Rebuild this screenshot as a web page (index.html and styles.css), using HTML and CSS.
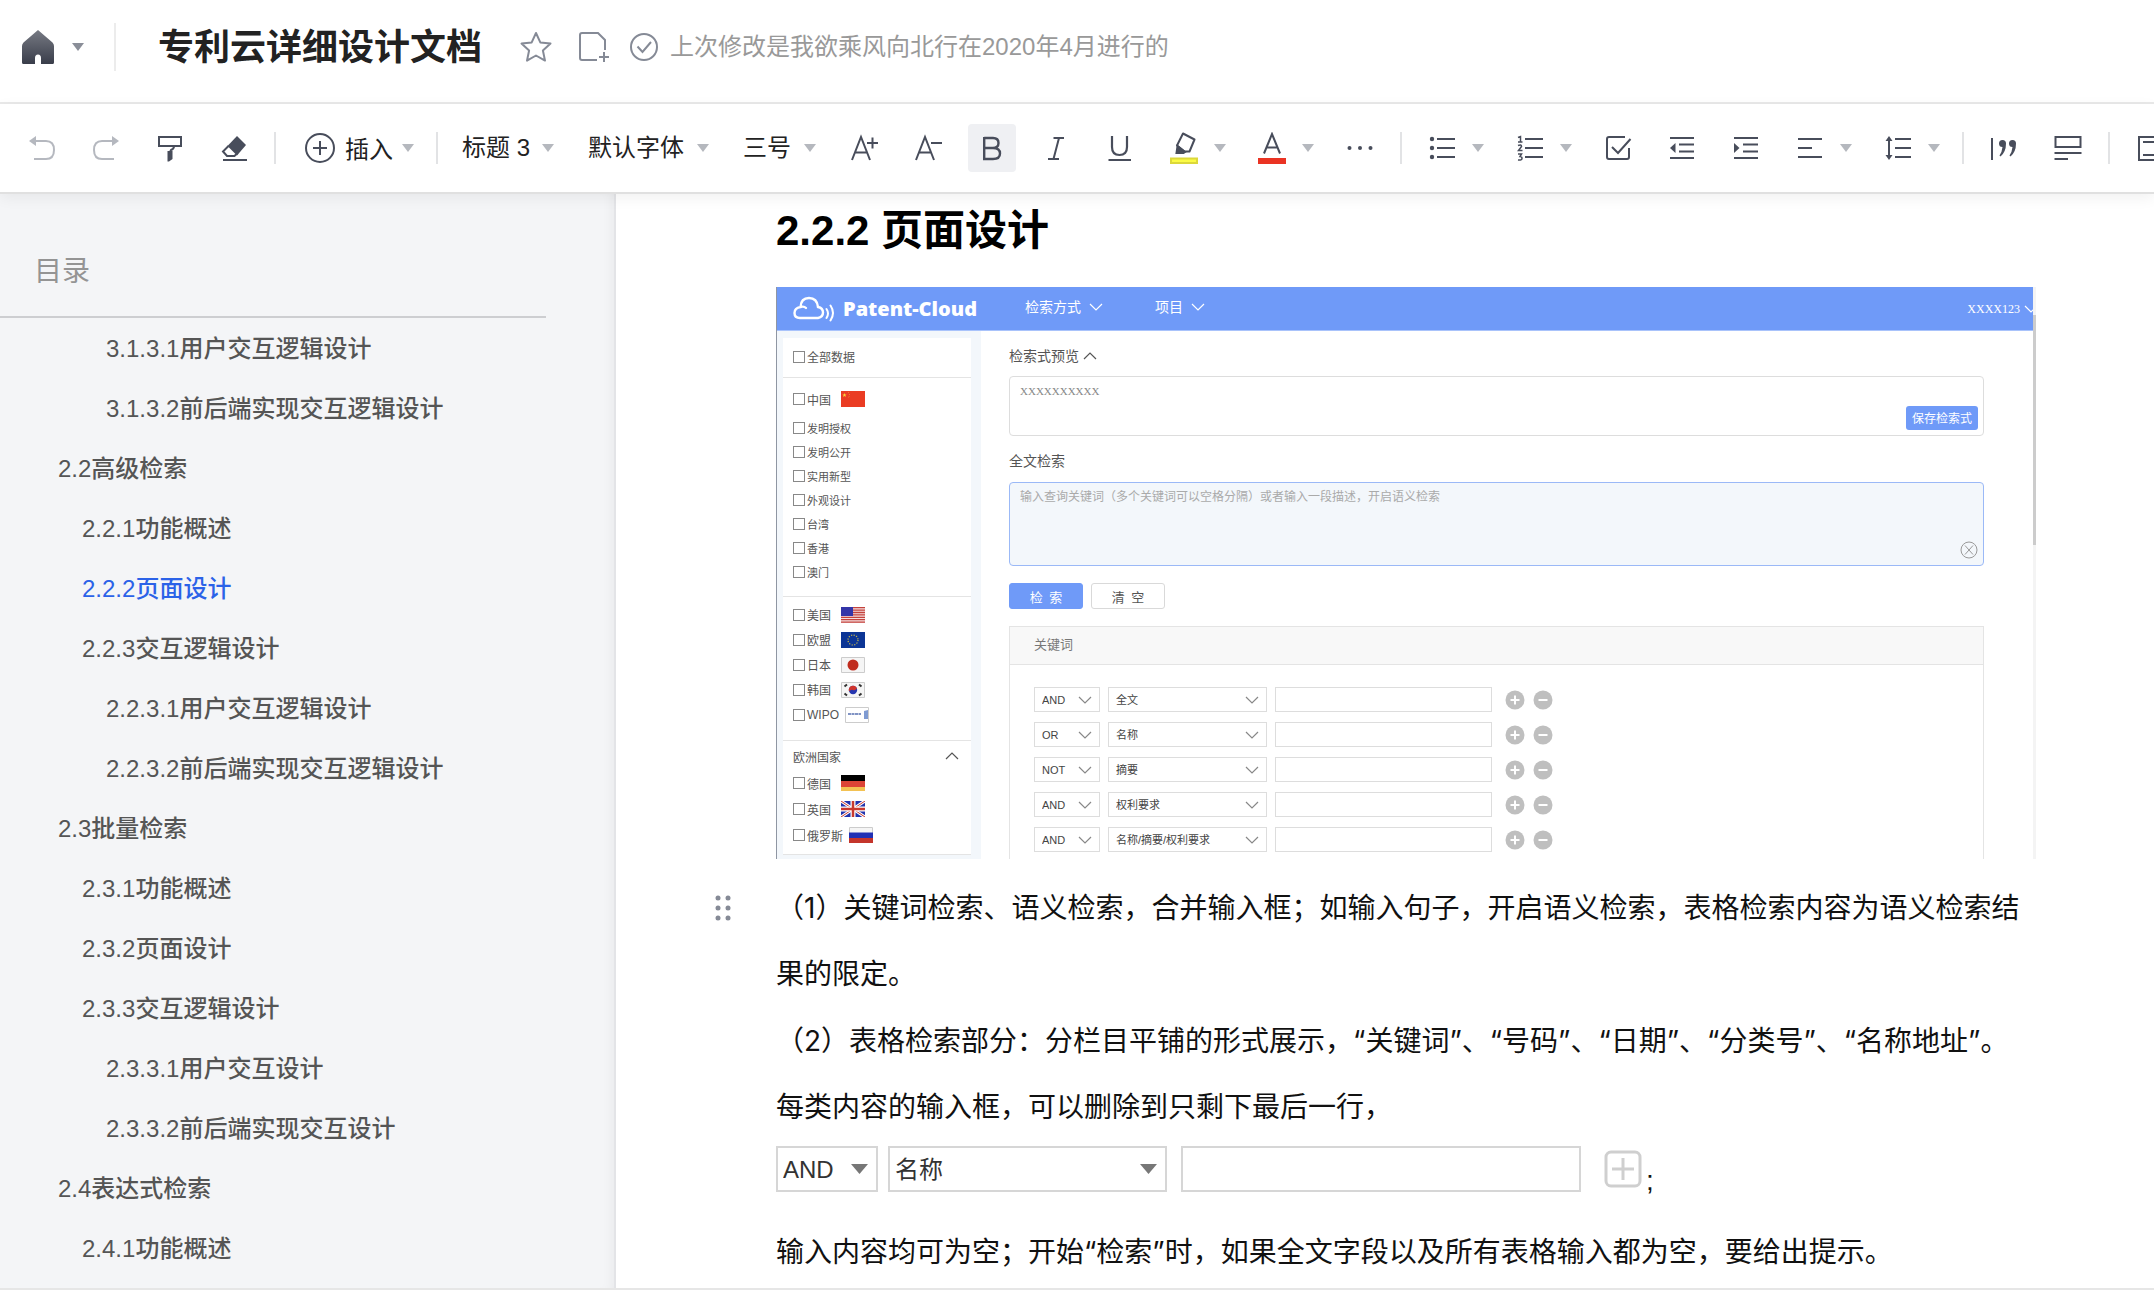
FILE: index.html
```html
<!DOCTYPE html>
<html lang="zh-CN">
<head>
<meta charset="utf-8">
<meta name="viewport" content="width=device-width, initial-scale=1">
<title>专利云详细设计文档</title>
<link rel="stylesheet" href="styles.css">
</head>
<body>
<svg class="sprite" aria-hidden="true">
  <symbol id="caret" viewBox="0 0 12 8"><path d="M0 0h12L6 8z" fill="currentColor"/></symbol>
  <symbol id="chev" viewBox="0 0 14 8"><path d="M1 1l6 6 6-6" fill="none" stroke="currentColor" stroke-width="1.200"/></symbol>
  <symbol id="add" viewBox="0 0 20 20"><circle cx="10" cy="10" r="9.5" fill="#bfbfbf"/><path d="M10 5.500v9M5.500 10h9" stroke="#fff" stroke-width="2"/></symbol>
  <symbol id="sub" viewBox="0 0 20 20"><circle cx="10" cy="10" r="9.5" fill="#bfbfbf"/><path d="M5.500 10h9" stroke="#fff" stroke-width="2"/></symbol>
</svg>

<header class="topbar">
  <button class="home" aria-label="首页">
    <svg width="32" height="34" viewBox="0 0 32 34"><defs><linearGradient id="g" x1="0" y1="0" x2="0" y2="1"><stop offset="0" stop-color="#777a83"/><stop offset="1" stop-color="#393d4a"/></linearGradient></defs><path d="M16 0L30.500 12.500Q32 14 32 16V32.500Q32 34 30.500 34H19V28Q19 24.500 16 24.500T13 28V34H1.500Q0 34 0 32.500V16Q0 14 1.500 12.500Z" fill="url(#g)"/></svg>
    <svg class="caret dark" width="12" height="8"><use href="#caret"/></svg>
  </button>
  <span class="divider tall"></span>
  <h1 class="doc-title">专利云详细设计文档</h1>
  <div class="title-tools">
    <button aria-label="收藏"><svg width="32" height="32" viewBox="0 0 32 32" fill="none" stroke="#858a96" stroke-width="2" stroke-linejoin="round"><path d="M16 2l4.300 9.400 10.200 1.200-7.600 6.900 2.100 10.100L16 24.500 7 29.600l2.100-10.100L1.500 12.600l10.200-1.200z"/></svg></button>
    <button aria-label="移动到"><svg width="32" height="32" viewBox="0 0 32 32" fill="none" stroke="#858a96" stroke-width="2"><path d="M19 29H4Q2 29 2 27V4Q2 2 4 2H20L27 9V19M26 21v10M21 26h10"/></svg></button>
  </div>
  <p class="saved"><svg width="28" height="28" viewBox="0 0 28 28" fill="none" stroke="#858a96" stroke-width="2"><circle cx="14" cy="14" r="13"/><path d="M7.500 13.500l5 5.500 8.500-10"/></svg>上次修改是我欲乘风向北行在2020年4月进行的</p>
</header>

<div class="toolbar" role="toolbar" aria-label="格式">
  <button class="tool" aria-label="撤销"><svg width="28" height="28" viewBox="0 0 28 28" fill="none" stroke="#b5b8bf" stroke-width="2"><path d="M8 7H18Q26 7 26 16T18 25H6"/><path d="M8 2v10L1 7z" fill="#b5b8bf" stroke="none"/></svg></button>
  <button class="tool" aria-label="重做"><svg width="28" height="28" viewBox="0 0 28 28" fill="none" stroke="#b5b8bf" stroke-width="2"><path d="M20 7H10Q2 7 2 16T10 25H22"/><path d="M20 2v10L27 7z" fill="#b5b8bf" stroke="none"/></svg></button>
  <button class="tool" aria-label="格式刷"><svg width="28" height="28" viewBox="0 0 28 28" fill="none" stroke="#484d5b" stroke-width="2"><path d="M3 3H25V12H3Z"/><path d="M18 12Q18 15 15 16L14 18"/><path d="M11.500 17h5v8l-3.500 2.500h-1.500z" fill="#484d5b" stroke="none"/></svg></button>
  <button class="tool" aria-label="清除格式"><svg width="28" height="28" viewBox="0 0 28 28" fill="none" stroke="#484d5b" stroke-width="2"><path d="M17 2L26 11 17 21.500 7.500 12z" fill="#484d5b" stroke="none"/><path d="M8.500 12L3 17.500 7 22H14.500L17 19.500M3 26H27"/></svg></button>
  <span class="divider"></span>
  <button class="tool insert"><svg width="32" height="32" viewBox="0 0 32 32" fill="none" stroke="#484d5b" stroke-width="2"><circle cx="16" cy="16" r="14"/><path d="M16 9v14M9 16h14"/></svg><span class="word">插入</span><svg class="caret" width="12" height="8"><use href="#caret"/></svg></button>
  <span class="divider"></span>
  <span class="drop w-heading"><select aria-label="段落样式"><option>标题 3</option></select><svg class="caret" width="12" height="8"><use href="#caret"/></svg></span>
  <span class="drop w-font"><select aria-label="字体"><option>默认字体</option></select><svg class="caret" width="12" height="8"><use href="#caret"/></svg></span>
  <span class="drop w-size"><select aria-label="字号"><option>三号</option></select><svg class="caret" width="12" height="8"><use href="#caret"/></svg></span>
  <button class="tool" aria-label="增大字号"><svg width="28" height="28" viewBox="0 0 28 28" fill="none" stroke="#484d5b" stroke-width="2"><path d="M2 26L11 3l9 23M5 18.500H17M17 9h11M22.500 3.500v11"/></svg></button>
  <button class="tool" aria-label="减小字号"><svg width="28" height="28" viewBox="0 0 28 28" fill="none" stroke="#484d5b" stroke-width="2"><path d="M2 26L11 3l9 23M5 18.500H17M17 9h11"/></svg></button>
  <button class="tool on" aria-label="加粗"><svg width="28" height="28" viewBox="0 0 28 28" fill="none" stroke="#484d5b" stroke-width="2.400"><path d="M6.200 4H15Q20.500 4 20.500 9T15 14H6.200M15 14Q22 14 22 19.500T15 25H6.200V3"/></svg></button>
  <button class="tool" aria-label="斜体"><svg width="28" height="28" viewBox="0 0 28 28" fill="none" stroke="#484d5b" stroke-width="2"><path d="M11.500 4H22M6 25H17M17 4L11.500 25"/></svg></button>
  <button class="tool" aria-label="下划线"><svg width="28" height="28" viewBox="0 0 28 28" fill="none" stroke="#484d5b" stroke-width="2.200"><path d="M6 2V13Q6 21 13.500 21T21 13V2M2.500 26H25"/></svg></button>
  <button class="tool split" aria-label="突出显示"><span class="glyph"><svg width="30" height="32" viewBox="0 0 30 32" fill="none" stroke="#484d5b" stroke-width="2"><path d="M14 1.500L25.500 7.500 20.500 19.500 15.500 19.500 8 13.500z" stroke-linejoin="round"/><path d="M8.500 14L16 20 14.500 21H7.500z" fill="#484d5b"/><path d="M2 26.500H28V31H2z" fill="#fbfb45" stroke="#dcd83a"/></svg></span><svg class="caret" width="12" height="8"><use href="#caret"/></svg></button>
  <button class="tool split" aria-label="文字颜色"><span class="glyph"><svg width="30" height="32" viewBox="0 0 30 32" fill="none" stroke="#484d5b" stroke-width="2"><path d="M7 21.500L15 2l8 19.500M9.500 15.500H20.500"/><path d="M1 26H29V32H1z" fill="#ea3323" stroke="none"/></svg></span><svg class="caret" width="12" height="8"><use href="#caret"/></svg></button>
  <button class="tool" aria-label="更多"><svg width="28" height="28" viewBox="0 0 28 28" fill="#484d5b"><circle cx="3.500" cy="14" r="2"/><circle cx="14" cy="14" r="2"/><circle cx="24.500" cy="14" r="2"/></svg></button>
  <span class="divider"></span>
  <button class="tool split" aria-label="项目符号"><span class="glyph"><svg width="28" height="28" viewBox="0 0 28 28" stroke="#484d5b" stroke-width="2.200" fill="#484d5b"><path d="M9 5H27M9 14H27M9 23H27"/><g stroke="none"><circle cx="4" cy="5" r="2.200"/><circle cx="4" cy="14" r="2.200"/><circle cx="4" cy="23" r="2.200"/></g></svg></span><svg class="caret" width="12" height="8"><use href="#caret"/></svg></button>
  <button class="tool split" aria-label="编号列表"><span class="glyph"><svg width="28" height="28" viewBox="0 0 28 28" stroke="#484d5b" fill="none"><path d="M9 5H27M9 14H27M9 23H27" stroke-width="2.200"/><path d="M2 3.500L4.500 2.500V8M2 8H6.500M2 11.500Q5.500 10 5.500 12.500L2.500 16.500H6.500M2 20H5.500L4 22.500Q6 22.500 6 24.500T2 26" stroke-width="1.500"/></svg></span><svg class="caret" width="12" height="8"><use href="#caret"/></svg></button>
  <button class="tool" aria-label="任务列表"><svg width="28" height="28" viewBox="0 0 28 28" fill="none" stroke="#484d5b" stroke-width="2"><path d="M21 3H5Q3 3 3 5V23Q3 25 5 25H23Q25 25 25 23V14M8 13l6 6L26.500 5"/></svg></button>
  <button class="tool" aria-label="减少缩进"><svg width="28" height="28" viewBox="0 0 28 28" fill="none" stroke="#484d5b" stroke-width="2"><path d="M2 4H26M11 10.500H26M11 17.500H26M2 24H26"/><path d="M7.500 9v10L2 14z" fill="#484d5b" stroke="none"/></svg></button>
  <button class="tool" aria-label="增加缩进"><svg width="28" height="28" viewBox="0 0 28 28" fill="none" stroke="#484d5b" stroke-width="2"><path d="M2 4H26M11 10.500H26M11 17.500H26M2 24H26"/><path d="M2 9v10L7.500 14z" fill="#484d5b" stroke="none"/></svg></button>
  <button class="tool split" aria-label="对齐方式"><span class="glyph"><svg width="28" height="28" viewBox="0 0 28 28" stroke="#484d5b" stroke-width="2.200"><path d="M2 5H26M2 14H16M2 23H26"/></svg></span><svg class="caret" width="12" height="8"><use href="#caret"/></svg></button>
  <button class="tool split" aria-label="行高"><span class="glyph"><svg width="28" height="28" viewBox="0 0 28 28" fill="none" stroke="#484d5b" stroke-width="2"><path d="M11 5H27M11 14H27M11 23H27M5 6V22"/><path d="M5 2l3.500 5h-7zM5 26l3.500-5h-7z" fill="#484d5b" stroke="none"/></svg></span><svg class="caret" width="12" height="8"><use href="#caret"/></svg></button>
  <span class="divider"></span>
  <button class="tool" aria-label="引用"><svg width="28" height="28" viewBox="0 0 28 28" fill="#484d5b"><path d="M1 4h2v22H1zM9 9.500a3.500 3.500 0 1 1 7 0Q16 18 10.500 22.500L9.500 21.500Q12 18 12.500 13Q9 13 9 9.500zM19 9.500a3.500 3.500 0 1 1 7 0Q26 18 20.500 22.500L19.500 21.500Q22 18 22.500 13Q19 13 19 9.500z"/></svg></button>
  <button class="tool" aria-label="高亮块"><svg width="28" height="28" viewBox="0 0 28 28" fill="none" stroke="#484d5b" stroke-width="2"><path d="M1.500 3H26.500V13H1.500ZM.500 19H27.500M.500 25H14"/></svg></button>
  <span class="divider"></span>
  <button class="tool" aria-label="分栏"><svg width="28" height="28" viewBox="0 0 28 28" fill="none" stroke="#484d5b" stroke-width="2"><path d="M3 3H27V26H3ZM7 8H20M7 21H20"/></svg></button>
</div>

<div class="workspace">
  <nav class="outline" aria-label="目录">
    <h2 class="outline-title">目录</h2>
    <ul class="outline-list">
      <li class="l3"><a href="#">3.1.3.1用户交互逻辑设计</a></li>
      <li class="l3"><a href="#">3.1.3.2前后端实现交互逻辑设计</a></li>
      <li class="l1"><a href="#">2.2高级检索</a></li>
      <li class="l2"><a href="#">2.2.1功能概述</a></li>
      <li class="l2"><a href="#" class="current">2.2.2页面设计</a></li>
      <li class="l2"><a href="#">2.2.3交互逻辑设计</a></li>
      <li class="l3"><a href="#">2.2.3.1用户交互逻辑设计</a></li>
      <li class="l3"><a href="#">2.2.3.2前后端实现交互逻辑设计</a></li>
      <li class="l1"><a href="#">2.3批量检索</a></li>
      <li class="l2"><a href="#">2.3.1功能概述</a></li>
      <li class="l2"><a href="#">2.3.2页面设计</a></li>
      <li class="l2"><a href="#">2.3.3交互逻辑设计</a></li>
      <li class="l3"><a href="#">2.3.3.1用户交互设计</a></li>
      <li class="l3"><a href="#">2.3.3.2前后端实现交互设计</a></li>
      <li class="l1"><a href="#">2.4表达式检索</a></li>
      <li class="l2"><a href="#">2.4.1功能概述</a></li>
    </ul>
  </nav>

  <main class="doc">
    <h3 class="doc-heading">2.2.2 页面设计</h3>

    <figure class="mock">
      <div class="mock-page">
        <div class="mock-bar">
          <span class="brand"><svg width="42" height="26" viewBox="0 0 42 26" fill="none" stroke="#fff" stroke-width="2.400" stroke-linecap="round"><path d="M7 22H25Q30 21 30 16.500T25 11Q24 2 16 2T7.500 11Q1.500 12 1.500 17T7 22ZM7.500 11Q11 10 13 12"/><path d="M33.500 13Q36.500 17.500 33.500 22M37.500 9.500Q42.500 17 37.500 24.500" stroke-width="2"/></svg><b>Patent-Cloud</b></span>
          <button class="menu">检索方式<svg width="14" height="8"><use href="#chev"/></svg></button>
          <button class="menu">项目<svg width="14" height="8"><use href="#chev"/></svg></button>
          <button class="menu user">XXXX123<svg width="14" height="8"><use href="#chev"/></svg></button>
        </div>
        <div class="mock-body">
          <div class="sources">
            <div class="group all"><label><input type="checkbox">全部数据</label></div>
            <div class="group china">
              <label class="lead"><input type="checkbox">中国<svg class="flag" viewBox="0 0 24 16"><path fill="#ea3c23" d="M0 0h24v16H0z"/><path fill="#fbd53a" d="M3.500 2l.6 1.500h1.500l-1.200 1 .5 1.500-1.400-.9L2.100 6l.5-1.500-1.200-1h1.500z"/><path stroke="#f0a030" stroke-dasharray="1 1.500" fill="none" d="M7 1q3 2.500 0 6"/></svg></label>
              <label><input type="checkbox">发明授权</label>
              <label><input type="checkbox">发明公开</label>
              <label><input type="checkbox">实用新型</label>
              <label><input type="checkbox">外观设计</label>
              <label><input type="checkbox">台湾</label>
              <label><input type="checkbox">香港</label>
              <label><input type="checkbox">澳门</label>
            </div>
            <div class="group world">
              <label><input type="checkbox">美国<svg class="flag" viewBox="0 0 24 16"><path fill="#f4dede" d="M0 0h24v16H0z"/><path stroke="#c4423c" stroke-width="1.300" d="M0 .700h24M0 3.100h24M0 5.500h24M0 7.900h24M0 10.300h24M0 12.700h24M0 15.200h24"/><path fill="#3335a8" d="M0 0h12v9H0z"/></svg></label>
              <label><input type="checkbox">欧盟<svg class="flag" viewBox="0 0 24 16"><path fill="#0c3595" d="M0 0h24v16H0z"/><circle cx="12" cy="8" r="5" fill="none" stroke="#c8b84a" stroke-width="1.200" stroke-dasharray="1.200 1.420"/></svg></label>
              <label><input type="checkbox">日本<svg class="flag" viewBox="0 0 24 16"><path fill="#f5f5f5" stroke="#ccc" d="M.500.500h23v15H.500z"/><circle cx="12" cy="8" r="5.500" fill="#c02c1e"/></svg></label>
              <label><input type="checkbox">韩国<svg class="flag" viewBox="0 0 24 16"><path fill="#f5f5f5" stroke="#ccc" d="M.500.500h23v15H.500z"/><circle cx="12" cy="8" r="4.200" fill="#2536b0"/><path fill="#d0342c" d="M8 9.500A4.200 4.200 0 0 1 16 6.500Q14 9 12 8T8 9.500z"/><path stroke="#333" stroke-width="2" d="M3.500 4.500L6 2.500M18 2.500L20.500 4.500M3.500 11.500L6 13.500M18 13.500l2.500-2"/></svg></label>
              <label class="wide"><input type="checkbox">WIPO<svg class="flag" viewBox="0 0 24 16"><path fill="#fff" stroke="#ccc" d="M.500.500h23v15H.500z"/><path stroke="#8093c4" stroke-width="2" stroke-dasharray="3 .500" d="M3 7h13"/><path fill="#7f9bd2" d="M19 4l4-1v9h-4z"/></svg></label>
            </div>
            <div class="group europe">
              <p class="group-title">欧洲国家<svg class="up" width="14" height="8"><use href="#chev"/></svg></p>
              <label><input type="checkbox">德国<svg class="flag" viewBox="0 0 24 16"><path d="M0 0h24v6H0z"/><path fill="#dc4436" d="M0 6h24v6H0z"/><path fill="#f3c253" d="M0 12h24v4H0z"/></svg></label>
              <label><input type="checkbox">英国<svg class="flag" viewBox="0 0 24 16"><path fill="#2133ad" d="M0 0h24v16H0z"/><path stroke="#fff" stroke-width="3" d="M0 0l24 16M24 0L0 16"/><path stroke="#c8392f" d="M0 0l24 16M24 0L0 16"/><path stroke="#fff" stroke-width="5" d="M12 0v16M0 8h24"/><path stroke="#c8392f" stroke-width="2.500" d="M12 0v16M0 8h24"/></svg></label>
              <label class="wide"><input type="checkbox">俄罗斯<svg class="flag" viewBox="0 0 24 16"><path fill="#f5f5f5" stroke="#ccc" d="M.500.500h23v15H.500z"/><path fill="#2030b4" d="M0 5.500h24V11H0z"/><path fill="#c4352b" d="M0 11h24v5H0z"/></svg></label>
            </div>
          </div>
          <form class="search">
            <label class="caption" for="preview">检索式预览<svg class="up" width="14" height="8"><use href="#chev"/></svg></label>
            <div class="field preview"><textarea id="preview">XXXXXXXXXX</textarea><button type="button" class="save">保存检索式</button></div>
            <label class="caption second" for="fulltext">全文检索</label>
            <div class="field full"><textarea id="fulltext" placeholder="输入查询关键词（多个关键词可以空格分隔）或者输入一段描述，开启语义检索"></textarea><button type="button" class="clear" aria-label="清除"><svg width="18" height="18" viewBox="0 0 18 18" fill="none" stroke="#999"><circle cx="9" cy="9" r="8"/><path d="M5 4.500l8 9M13 4.500l-8 9"/></svg></button></div>
            <div class="actions"><button type="button" class="primary">检&ensp;索</button><button type="button">清&ensp;空</button></div>
            <fieldset class="panel">
              <legend class="panel-head">关键词</legend>
              <div class="rows">
                <div class="row"><span class="pick op"><select aria-label="逻辑 1"><option>AND</option></select><svg width="14" height="8"><use href="#chev"/></svg></span><span class="pick key"><select aria-label="字段 1"><option>全文</option></select><svg width="14" height="8"><use href="#chev"/></svg></span><input class="term" type="text" aria-label="关键词 1"><button type="button" aria-label="添加"><svg width="20" height="20"><use href="#add"/></svg></button><button type="button" aria-label="删除"><svg width="20" height="20"><use href="#sub"/></svg></button></div>
                <div class="row"><span class="pick op"><select aria-label="逻辑 2"><option>OR</option></select><svg width="14" height="8"><use href="#chev"/></svg></span><span class="pick key"><select aria-label="字段 2"><option>名称</option></select><svg width="14" height="8"><use href="#chev"/></svg></span><input class="term" type="text" aria-label="关键词 2"><button type="button" aria-label="添加"><svg width="20" height="20"><use href="#add"/></svg></button><button type="button" aria-label="删除"><svg width="20" height="20"><use href="#sub"/></svg></button></div>
                <div class="row"><span class="pick op"><select aria-label="逻辑 3"><option>NOT</option></select><svg width="14" height="8"><use href="#chev"/></svg></span><span class="pick key"><select aria-label="字段 3"><option>摘要</option></select><svg width="14" height="8"><use href="#chev"/></svg></span><input class="term" type="text" aria-label="关键词 3"><button type="button" aria-label="添加"><svg width="20" height="20"><use href="#add"/></svg></button><button type="button" aria-label="删除"><svg width="20" height="20"><use href="#sub"/></svg></button></div>
                <div class="row"><span class="pick op"><select aria-label="逻辑 4"><option>AND</option></select><svg width="14" height="8"><use href="#chev"/></svg></span><span class="pick key"><select aria-label="字段 4"><option>权利要求</option></select><svg width="14" height="8"><use href="#chev"/></svg></span><input class="term" type="text" aria-label="关键词 4"><button type="button" aria-label="添加"><svg width="20" height="20"><use href="#add"/></svg></button><button type="button" aria-label="删除"><svg width="20" height="20"><use href="#sub"/></svg></button></div>
                <div class="row"><span class="pick op"><select aria-label="逻辑 5"><option>AND</option></select><svg width="14" height="8"><use href="#chev"/></svg></span><span class="pick key"><select aria-label="字段 5"><option>名称/摘要/权利要求</option></select><svg width="14" height="8"><use href="#chev"/></svg></span><input class="term" type="text" aria-label="关键词 5"><button type="button" aria-label="添加"><svg width="20" height="20"><use href="#add"/></svg></button><button type="button" aria-label="删除"><svg width="20" height="20"><use href="#sub"/></svg></button></div>
              </div>
            </fieldset>
          </form>
        </div>
      </div>
      <div class="mock-scroll"><span></span></div>
    </figure>

    <div class="para">
      <button class="grip" aria-label="拖动段落"><svg width="16" height="26" viewBox="0 0 16 26" fill="#858a96"><circle cx="3" cy="3" r="2.500"/><circle cx="13" cy="3" r="2.500"/><circle cx="3" cy="13" r="2.500"/><circle cx="13" cy="13" r="2.500"/><circle cx="3" cy="23" r="2.500"/><circle cx="13" cy="23" r="2.500"/></svg></button>
      <p>（1）关键词检索、语义检索，合并输入框；如输入句子，开启语义检索，表格检索内容为语义检索结果的限定。</p>
    </div>
    <div class="para"><p>（2）表格检索部分：分栏目平铺的形式展示，“关键词”、“号码”、“日期”、“分类号”、“名称地址”。每类内容的输入框，可以删除到只剩下最后一行，</p></div>
    <div class="sample">
      <span class="box and"><select aria-label="示例逻辑"><option>AND</option></select><svg class="caret" width="17" height="10" viewBox="0 0 12 8" preserveAspectRatio="none"><path d="M0 0h12L6 8z" fill="currentColor"/></svg></span>
      <span class="box name"><select aria-label="示例字段"><option>名称</option></select><svg class="caret" width="17" height="10" viewBox="0 0 12 8" preserveAspectRatio="none"><path d="M0 0h12L6 8z" fill="currentColor"/></svg></span>
      <input class="box value" type="text" aria-label="示例关键词">
      <button class="plus" aria-label="添加一行"><svg width="38" height="38" viewBox="0 0 38 38" fill="none" stroke="#cfcfcf" stroke-width="3"><rect x="2" y="2" width="34" height="34" rx="5"/><path d="M19 8v22M8 19h22"/></svg></button>
      <span class="semi">;</span>
    </div>
    <div class="para"><p>输入内容均可为空；开始“检索”时，如果全文字段以及所有表格输入都为空，要给出提示。</p></div>
  </main>
</div>
</body>
</html>
```

FILE: styles.css
```css
* { box-sizing: border-box; }

body {
  margin: 0;
  min-height: 100vh;
  display: flex;
  flex-direction: column;
  overflow-x: hidden;
  background: #fff;
  border-bottom: 2px solid #e6e6e6;
  font-family: "Liberation Sans", "Noto Sans CJK SC", sans-serif;
  color: #111;
}

h1, h2, h3, p, ul, figure, fieldset { margin: 0; padding: 0; }
ul { list-style: none; }
a { color: inherit; text-decoration: none; }
svg { display: block; flex: none; }

button, select, input, textarea {
  margin: 0;
  padding: 0;
  border: 0;
  background: none;
  color: inherit;
  font: inherit;
  appearance: none;
  border-radius: 0;
}

.sprite { position: absolute; width: 0; height: 0; }
.caret { color: #b5b8be; }
.caret.dark { color: #8a8e98; }

/* Title bar */
.topbar {
  display: flex;
  align-items: center;
  height: 104px;
  padding: 0 22px 8px;
  border-bottom: 2px solid #e9e9e9;
}
.home { display: flex; align-items: center; gap: 18px; }
.divider { flex: none; width: 2px; height: 32px; background: #e2e3e5; }
.divider.tall { height: 48px; margin: 0 42px 0 30px; background: #ececec; }
.doc-title { padding-top: 2px; font-size: 36px; line-height: 48px; font-weight: 700; color: #222; }
.title-tools { display: flex; gap: 26px; margin: 0 20px 0 38px; }
.saved { display: flex; align-items: center; gap: 12px; font-size: 24px; line-height: 32px; color: #999; white-space: nowrap; }

/* Formatting toolbar */
.toolbar {
  position: relative;
  z-index: 1;
  display: flex;
  align-items: center;
  gap: 16px;
  height: 90px;
  padding-left: 18px;
  background: #fff;
  border-bottom: 2px solid #e0e0e0;
  box-shadow: 0 4px 14px rgba(0, 0, 0, .06);
  font-size: 24px;
  color: #222;
}
.tool {
  flex: none;
  display: flex;
  align-items: center;
  justify-content: center;
  width: 48px;
  height: 48px;
  border-radius: 4px;
}
.tool.on { background: #eff0f3; }
.tool.insert { width: 128px; justify-content: flex-start; gap: 9px; padding-left: 12px; white-space: nowrap; }
.word { padding-bottom: 2px; }
.tool.split { width: 72px; justify-content: flex-start; }
.split .glyph { display: flex; justify-content: center; width: 48px; margin-right: 6px; }
.drop { flex: none; display: grid; align-items: center; height: 48px; padding: 0 8px 0 10px; }
.drop > * { grid-area: 1 / 1; }
.drop select { width: 100%; padding-bottom: 2px; }
.drop .caret { justify-self: end; pointer-events: none; }
.w-heading { width: 108px; padding-left: 8px; }
.w-font { width: 139px; }
.w-size { width: 91px; }

/* Columns */
.workspace { flex: 1; display: flex; }
.outline {
  flex: none;
  width: 616px;
  background: #f4f5f7;
  border-right: 2px solid #e3e4e7;
  box-shadow: inset -10px 0 12px -8px rgba(0, 0, 0, .05);
}
.outline-title {
  width: 546px;
  padding: 56px 34px 22px;
  border-bottom: 2px solid #cdced1;
  font-size: 28px;
  line-height: 44px;
  font-weight: 400;
  color: #949494;
}
.outline-list { padding-top: 1px; font-size: 24px; line-height: 60px; font-weight: 500; color: #555; }
.l1 { padding-left: 58px; }
.l2 { padding-left: 82px; }
.l3 { padding-left: 106px; }
.outline-list .current { color: #2b62e8; }

.doc { flex: 1; min-width: 0; padding: 8px 112px 0 160px; }
.doc > * { max-width: 1260px; }
.doc-heading { font-size: 42px; line-height: 58px; font-weight: 700; color: #000; }

/* Embedded page picture */
.mock {
  display: flex;
  height: 572px;
  margin: 27px 0 16px;
  overflow: hidden;
  border-left: 1px solid #8f96a3;
  font-size: 12px;
  color: #555;
}
.mock-page { flex: 1; min-width: 0; overflow: hidden; }
.mock-scroll { width: 3px; padding-top: 28px; background: #f4f4f4; }
.mock-scroll span { display: block; height: 230px; background: #ccc; }
.mock-bar {
  display: flex;
  align-items: center;
  height: 44px;
  padding-left: 16px;
  background: #6f9af8;
  border-bottom: 1px solid #a9c3fb;
  color: #fff;
}
.brand { display: flex; align-items: center; gap: 8px; width: 232px; }
.brand b { font-family: "Open Sans", sans-serif; font-weight: 800; font-size: 20px; line-height: 24px; }
.menu { display: flex; align-items: center; gap: 8px; margin: 0 52px 4px 0; font-size: 14px; line-height: 20px; white-space: nowrap; }
.menu.user { margin: 0 -5px 0 auto; gap: 4px; font-family: "Liberation Serif", serif; font-size: 12px; }
.mock-body { display: flex; }

.sources { flex: none; width: 204px; padding: 7px 10px 0 6px; background: #f3f7fb; }
.group { padding-left: 10px; background: #fff; border-bottom: 1px solid #e4e4e4; }
.group label { display: flex; align-items: center; height: 24px; padding-bottom: 2px; }
.group input { flex: none; width: 12px; height: 12px; margin-right: 2px; border: 1px solid #888; background: #fff; }
.flag { width: 24px; height: 16px; margin-left: 10px; }
.all label { height: 39px; }
.china { padding-top: 5px; padding-bottom: 11px; font-size: 11px; }
.china .lead { height: 34px; font-size: 12px; }
.world { padding-top: 6px; padding-bottom: 12px; }
.world label { height: 25px; }
.group .wide .flag { margin-left: 6px; }
.europe { padding-bottom: 5px; }
.europe label { height: 26px; }
.group-title { display: flex; align-items: center; justify-content: space-between; height: 30px; padding-right: 12px; }
.up { transform: rotate(180deg); }

.search { flex: 1; min-width: 0; padding: 15px 49px 0 28px; }
.caption { display: flex; align-items: center; gap: 4px; margin-bottom: 10px; font-size: 14px; line-height: 20px; }
.caption.second { margin: 15px 0 11px; }
.field { display: flex; align-items: flex-end; border-radius: 4px; }
.field textarea { flex: 1; align-self: stretch; padding: 6px 10px; resize: none; overflow: hidden; line-height: 16px; }
.field textarea::placeholder { color: #aaa; opacity: 1; }
.preview { height: 60px; padding: 0 5px 5px 0; border: 1px solid #ddd; }
.preview textarea { font-family: "Liberation Serif", serif; font-size: 11px; color: #888; }
.full { height: 84px; padding: 0 5px 6px 0; border: 1px solid #9bb9f7; background: #f3f7fb; }
.save { width: 72px; height: 24px; padding-bottom: 2px; border-radius: 3px; background: #6f9af8; color: #fff; }
.actions { display: flex; gap: 8px; margin: 17px 0; font-size: 13px; }
.actions button { width: 74px; height: 26px; border: 1px solid #d9d9d9; border-radius: 3px; }
.actions .primary { border-color: #6f9af8; background: #6f9af8; color: #fff; }
.panel { min-width: 0; border: 1px solid #e4e4e4; }
.panel-head { float: left; width: 100%; height: 38px; padding: 0 24px; background: #f8f8f8; border-bottom: 1px solid #e4e4e4; font-size: 13px; line-height: 36px; color: #777; }
.rows { clear: both; display: grid; gap: 10px; padding: 22px 24px 24px; }
.row { display: flex; align-items: center; gap: 8px; font-size: 11px; color: #444; }
.pick { display: grid; align-items: center; height: 25px; padding: 0 7px; border: 1px solid #ddd; }
.pick > * { grid-area: 1 / 1; }
.pick select { width: 100%; }
.pick svg { justify-self: end; pointer-events: none; color: #888; }
.op { width: 66px; }
.key { width: 159px; }
.term { width: 217px; height: 25px; margin-right: 5px; border: 1px solid #ddd; }

/* Body text */
.para { position: relative; margin-top: 1px; font-family: Inter, "Noto Sans CJK SC", sans-serif; font-size: 28px; line-height: 66px; color: #111; }
.grip { position: absolute; left: -61px; top: 20px; }
.sample { display: flex; align-items: center; height: 48px; margin: 5px 0 26px; font-size: 24px; color: #333; }
.box { flex: none; height: 46px; border: 2px solid #d6d6d6; }
span.box { display: grid; align-items: center; padding: 0 8px 0 5px; }
.box > * { grid-area: 1 / 1; }
.box select { width: 100%; }
.box .caret { justify-self: end; pointer-events: none; color: #777; }
.and { width: 102px; margin-right: 10px; }
.name { width: 279px; margin-right: 14px; }
.value { width: 400px; margin-right: 23px; }
.semi { align-self: flex-end; margin-left: 4px; font-size: 28px; line-height: 24px; color: #111; }
```
